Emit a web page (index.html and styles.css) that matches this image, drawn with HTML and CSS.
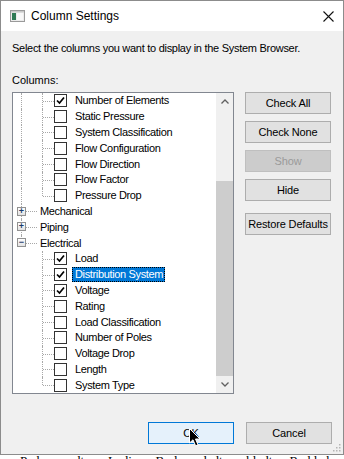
FILE: index.html
```html
<!DOCTYPE html>
<html>
    <head>
        <title>Column Settings</title>
        <link rel="stylesheet" href="styles.css">
    </head>
    <body>
        <div class="window">
            <div class="titlebar">
                <svg class="app-icon" viewBox="0 0 15 12">
                    <rect x="0.5" y="0.5" width="14" height="11" fill="#ececec" stroke="#9a9a9a"/>
                    <rect x="2" y="3" width="4" height="7" fill="#2f7a55"/>
                    <rect x="7" y="3" width="6" height="7" fill="#f8f8f8"/>
                    <rect x="1" y="1" width="13" height="1.5" fill="#c9c9c9"/>
                </svg>
                <span class="title">Column Settings</span>
                <svg class="close" viewBox="0 0 11 11">
                    <path d="M0.5 0.5 L10.5 10.5 M10.5 0.5 L0.5 10.5" stroke="#111" stroke-width="1.1" fill="none"/>
                </svg>
            </div>
            <div class="content">
                <p class="intro">Select the columns you want to display in the System Browser.</p>
                <p class="label">Columns:</p>
                <div class="main">
                    <div class="tree">
                        <div class="items">
                            <div class="row"><span class="g g1 v"></span><span class="g g2 t"></span><span class="cb on"><svg viewBox="0 0 11 11"><path d="M2 5.5 L4.5 8 L9 2.5" fill="none" stroke="#000" stroke-width="1.7"/></svg></span><span class="txt">Number of Elements</span></div>
                            <div class="row"><span class="g g1 v"></span><span class="g g2 t"></span><span class="cb"></span><span class="txt">Static Pressure</span></div>
                            <div class="row"><span class="g g1 v"></span><span class="g g2 t"></span><span class="cb"></span><span class="txt">System Classification</span></div>
                            <div class="row"><span class="g g1 v"></span><span class="g g2 t"></span><span class="cb"></span><span class="txt">Flow Configuration</span></div>
                            <div class="row"><span class="g g1 v"></span><span class="g g2 t"></span><span class="cb"></span><span class="txt">Flow Direction</span></div>
                            <div class="row"><span class="g g1 v"></span><span class="g g2 t"></span><span class="cb"></span><span class="txt">Flow Factor</span></div>
                            <div class="row"><span class="g g1 v"></span><span class="g g2 l"></span><span class="cb"></span><span class="txt">Pressure Drop</span></div>
                            <div class="row"><span class="g g1 top t"><span class="exp">+</span></span><span class="txt">Mechanical</span></div>
                            <div class="row"><span class="g g1 top t"><span class="exp">+</span></span><span class="txt">Piping</span></div>
                            <div class="row"><span class="g g1 top l"><span class="exp">&minus;</span></span><span class="txt">Electrical</span></div>
                            <div class="row"><span class="g g1"></span><span class="g g2 t"></span><span class="cb on"><svg viewBox="0 0 11 11"><path d="M2 5.5 L4.5 8 L9 2.5" fill="none" stroke="#000" stroke-width="1.7"/></svg></span><span class="txt">Load</span></div>
                            <div class="row"><span class="g g1"></span><span class="g g2 t"></span><span class="cb on"><svg viewBox="0 0 11 11"><path d="M2 5.5 L4.5 8 L9 2.5" fill="none" stroke="#000" stroke-width="1.7"/></svg></span><span class="txt selected">Distribution System</span></div>
                            <div class="row"><span class="g g1"></span><span class="g g2 t"></span><span class="cb on"><svg viewBox="0 0 11 11"><path d="M2 5.5 L4.5 8 L9 2.5" fill="none" stroke="#000" stroke-width="1.7"/></svg></span><span class="txt">Voltage</span></div>
                            <div class="row"><span class="g g1"></span><span class="g g2 t"></span><span class="cb"></span><span class="txt">Rating</span></div>
                            <div class="row"><span class="g g1"></span><span class="g g2 t"></span><span class="cb"></span><span class="txt">Load Classification</span></div>
                            <div class="row"><span class="g g1"></span><span class="g g2 t"></span><span class="cb"></span><span class="txt">Number of Poles</span></div>
                            <div class="row"><span class="g g1"></span><span class="g g2 t"></span><span class="cb"></span><span class="txt">Voltage Drop</span></div>
                            <div class="row"><span class="g g1"></span><span class="g g2 t"></span><span class="cb"></span><span class="txt">Length</span></div>
                            <div class="row"><span class="g g1"></span><span class="g g2 l"></span><span class="cb"></span><span class="txt">System Type</span></div>
                        </div>
                        <div class="scrollbar">
                            <div class="sb-btn"><svg viewBox="0 0 8 5"><path d="M0.5 4.5 L4 1 L7.5 4.5" fill="none" stroke="#606060" stroke-width="1.3"/></svg></div>
                            <div class="sb-track">
                                <div class="sb-space"></div>
                                <div class="sb-thumb"></div>
                            </div>
                            <div class="sb-btn"><svg viewBox="0 0 8 5"><path d="M0.5 0.5 L4 4 L7.5 0.5" fill="none" stroke="#606060" stroke-width="1.3"/></svg></div>
                        </div>
                    </div>
                    <div class="side-buttons">
                        <button class="btn">Check All</button>
                        <button class="btn">Check None</button>
                        <button class="btn" disabled>Show</button>
                        <button class="btn">Hide</button>
                        <button class="btn restore">Restore Defaults</button>
                    </div>
                </div>
                <div class="footer">
                    <button class="btn default">OK
                        <svg class="cursor" viewBox="0 0 12 19">
                            <path d="M0.5 0.5 L0.5 15 L4 11.8 L6.6 17.8 L9 16.8 L6.5 11 L11 11 Z" fill="#000" stroke="#fff" stroke-width="1"/>
                        </svg>
                    </button>
                    <button class="btn">Cancel</button>
                </div>
            </div>
            <svg class="grip" viewBox="0 0 8 8">
                <rect x="6" y="0" width="1.5" height="1.5" fill="#b5b5b5"/>
                <rect x="3" y="3" width="1.5" height="1.5" fill="#b5b5b5"/>
                <rect x="6" y="3" width="1.5" height="1.5" fill="#b5b5b5"/>
                <rect x="0" y="6" width="1.5" height="1.5" fill="#b5b5b5"/>
                <rect x="3" y="6" width="1.5" height="1.5" fill="#b5b5b5"/>
                <rect x="6" y="6" width="1.5" height="1.5" fill="#b5b5b5"/>
            </svg>
        </div>
        <div class="below">Ped aaadtu Ladio Boda dadtu bladt Raddad Padddnt lbadat Rad</div>
    </body>
</html>
```

FILE: styles.css
```css
*
{
    box-sizing: border-box;
}

body
{
    margin: 0;
    background-color: #fff;
    font-family: "Liberation Sans", Arial, sans-serif;
    font-size: 11px;
    color: #000;
}

.window
{
    position: relative;
    width: 344px;
    height: 455px;
    border: 1px solid #8c8c8c;
    background-color: #f0f0f0;
    display: flex;
    flex-direction: column;
}

.titlebar
{
    height: 30px;
    background-color: #fff;
    display: flex;
    align-items: center;
    padding-left: 9px;
}

.app-icon
{
    width: 15px;
    height: 12px;
    margin-right: 6px;
}

.title
{
    flex: 1;
    font-size: 12px;
}

.close
{
    width: 11px;
    height: 11px;
    margin-right: 9px;
}

.content
{
    flex: 1;
    display: flex;
    flex-direction: column;
    padding: 10px 11px 0 11px;
}

.intro
{
    margin: 0;
    line-height: 15px;
    letter-spacing: -0.28px;
}

.label
{
    margin: 17px 0 0 0;
    line-height: 15px;
}

.main
{
    display: flex;
    gap: 11px;
    margin-top: 4px;
}

/* tree view */
.tree
{
    width: 222px;
    height: 302px;
    border: 1px solid #828790;
    background-color: #fff;
    display: flex;
}

.items
{
    flex: 1;
    overflow: hidden;
}

.row
{
    height: 15.8px;
    display: flex;
    align-items: center;
}

.g
{
    position: relative;
    align-self: stretch;
    flex: none;
}

.g1
{
    width: 21px;
}

.g1.top
{
    width: 24px;
}

.g2
{
    width: 20px;
}

.g.v::before, .g.t::before, .g.l::before
{
    content: '';
    position: absolute;
    left: 8px;
    top: 0;
    bottom: 0;
    border-left: 1px dotted #a8a8a8;
}

.g.l::before
{
    bottom: 50%;
}

.g.t::after, .g.l::after
{
    content: '';
    position: absolute;
    left: 9px;
    right: 0;
    top: 50%;
    border-top: 1px dotted #a8a8a8;
}

.exp
{
    position: absolute;
    z-index: 1;
    left: 4px;
    top: 3px;
    width: 9px;
    height: 9px;
    border: 1px solid #919191;
    background: linear-gradient(#fff, #e2e2e2);
    color: #1c3c6c;
    font-size: 9px;
    line-height: 6px;
    text-align: center;
    font-weight: bold;
}

.cb
{
    width: 13px;
    height: 13px;
    flex: none;
    border: 1px solid #333;
    background-color: #fff;
    display: flex;
}

.cb svg
{
    width: 11px;
    height: 11px;
}

.txt
{
    margin-left: 5px;
    padding: 0 2px 0 3px;
    line-height: 15px;
    white-space: nowrap;
    letter-spacing: -0.35px;
}

.g1.top + .txt
{
    margin-left: 0;
}

.txt.selected
{
    background-color: #0078d7;
    color: #fff;
    outline: 1px dotted #000;
    outline-offset: -1px;
}

.scrollbar
{
    width: 17px;
    background-color: #f0f0f0;
    display: flex;
    flex-direction: column;
}

.sb-btn
{
    height: 17px;
    display: flex;
    align-items: center;
    justify-content: center;
}

.sb-btn svg
{
    width: 8px;
    height: 5px;
}

.sb-track
{
    flex: 1;
    display: flex;
    flex-direction: column;
}

.sb-space
{
    height: 71px;
}

.sb-thumb
{
    flex: 1;
    background-color: #cdcdcd;
}

/* buttons */
.side-buttons
{
    display: flex;
    flex-direction: column;
    gap: 7px;
}

.btn
{
    position: relative;
    width: 86px;
    height: 22px;
    padding: 0;
    border: 1px solid #adadad;
    background-color: #e1e1e1;
    font-family: inherit;
    font-size: 11px;
    letter-spacing: -0.15px;
    color: #000;
}

.btn:disabled
{
    background-color: #cccccc;
    border-color: #bfbfbf;
    color: #9a9a9a;
}

.restore
{
    margin-top: 5px;
}

.footer
{
    display: flex;
    justify-content: flex-end;
    gap: 12px;
    margin-top: 28px;
}

.btn.default
{
    border-color: #0078d7;
    background-color: #e5f1fb;
}

.cursor
{
    position: absolute;
    left: 40px;
    top: 5px;
    width: 12px;
    height: 19px;
}

.grip
{
    position: absolute;
    right: 2px;
    bottom: 2px;
    width: 8px;
    height: 8px;
}

.below
{
    height: 4px;
    overflow: hidden;
    padding-left: 20px;
    font-family: "Liberation Serif", serif;
    font-size: 13px;
    line-height: 12px;
    word-spacing: 14px;
}
```
